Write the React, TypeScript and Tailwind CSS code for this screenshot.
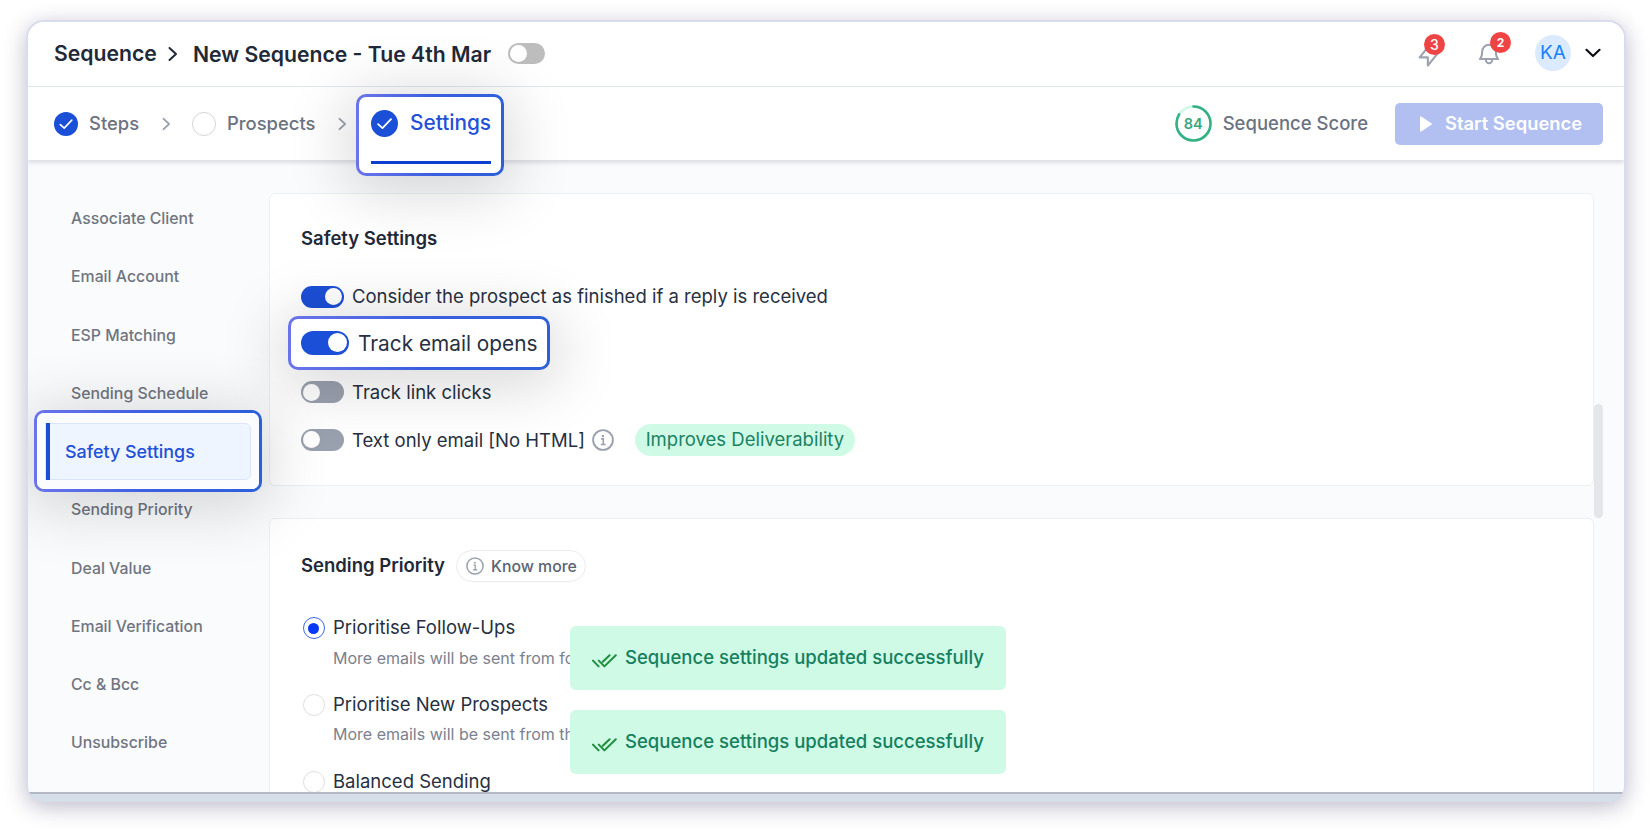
import type { ReactNode } from 'react';
import clsx from 'clsx';

const NAV_BEFORE = ['Associate Client', 'Email Account', 'ESP Matching', 'Sending Schedule'];
const NAV_AFTER = ['Sending Priority', 'Deal Value', 'Email Verification', 'Cc & Bcc', 'Unsubscribe'];

const PRIORITIES = [
  { title: 'Prioritise Follow-Ups', hint: 'More emails will be sent from follow', checked: true },
  { title: 'Prioritise New Prospects', hint: 'More emails will be sent from the', checked: false },
  { title: 'Balanced Sending', checked: false },
];

function Spotlight({ className, children }: { className: string; children: ReactNode }) {
  return (
    <div
      className={clsx(
        'absolute z-10 rounded-[10px] bg-linear-to-r from-[#6b74ea] via-[#3a5fe0] to-[#2e5fdb] p-[3px] shadow-[0_8px_60px_10px_rgba(0,0,0,0.15)]',
        className
      )}
    >
      <div className="h-full w-full rounded-[7px] bg-white">{children}</div>
    </div>
  );
}

function CheckCircle({ className }: { className: string }) {
  return (
    <svg viewBox="0 0 24 24" className={clsx('shrink-0', className)} fill="none">
      <circle cx="12" cy="12" r="12" fill="#1c4fd7" />
      <path d="M6.3 12.6l3.9 3.5 7.6-8" stroke="white" strokeWidth="1.6" strokeLinecap="round" strokeLinejoin="round" />
    </svg>
  );
}

function Chevron({ className }: { className: string }) {
  return (
    <svg viewBox="0 0 10 16" className={clsx('shrink-0', className)} fill="none" stroke="currentColor">
      <path d="M1.5 2l6.5 6-6.5 6" strokeWidth="2" strokeLinecap="round" strokeLinejoin="round" />
    </svg>
  );
}

function InfoIcon({ className }: { className: string }) {
  return (
    <svg viewBox="0 0 24 24" className={clsx('shrink-0 text-[#9aa1ae]', className)} fill="none" stroke="currentColor">
      <circle cx="12" cy="12" r="10.8" strokeWidth="2" />
      <path d="M10 10.8h2.3v6M9.6 17h5.2" strokeWidth="1.7" />
      <circle cx="11.9" cy="7.6" r="1.3" fill="currentColor" stroke="none" />
    </svg>
  );
}

function Toggle({ on }: { on?: boolean }) {
  return (
    <span
      className={clsx(
        'flex h-[22px] w-[43px] shrink-0 items-center rounded-full px-[2px]',
        on ? 'justify-end bg-[#1c4fd7]' : 'bg-[#9aa1ae]'
      )}
    >
      <span className="h-[17px] w-[17px] rounded-full bg-white" />
    </span>
  );
}

function Toast() {
  return (
    <div className="flex h-16 w-[436px] items-center rounded-md bg-[#cffae6] pl-[22px]">
      <svg viewBox="0 0 25 14" className="mt-[5px] h-[14px] w-[25px] shrink-0" fill="none" stroke="#1e8f3c" strokeWidth="2" strokeLinecap="round" strokeLinejoin="round">
        <path d="M1 6.6l5.6 5.8M6.8 6.6l5.6 5.8L23.8 1.2M10.8 7.8l6.8-6.6" />
      </svg>
      <span className="ml-2 text-[18.55px] font-medium whitespace-nowrap text-[#14805e]">
        Sequence settings updated successfully
      </span>
    </div>
  );
}

function Header() {
  return (
    <header className="flex h-[65px] shrink-0 items-center border-b border-[#e5e7eb] pr-[23px] pb-[2px] pl-[26px] text-[#1f2937]">
      <span className="w-[103px] pt-[2px] text-[21.2px] font-semibold">Sequence</span>
      <Chevron className="mt-px ml-[11px] h-4 w-[10px]" />
      <span className="ml-[15px] pt-[3px] text-[21.2px] font-semibold whitespace-nowrap">New Sequence - Tue 4th Mar</span>
      <span className="ml-[17px] flex h-[21px] w-[37px] items-center rounded-full bg-[#bdbdbd] px-[2px]">
        <span className="h-[17px] w-[17px] rounded-full bg-white" />
      </span>
      <div className="ml-auto flex items-center">
        <div className="relative mt-[3px]">
          <svg viewBox="0 0 24 24" className="h-7 w-7" fill="none" stroke="#9ca3af" strokeWidth="1.8" strokeLinejoin="round">
            <path d="M13 10V3L4 14h7v7l9-11h-7z" />
          </svg>
          <span className="absolute top-[-7px] left-[9px] flex h-[21px] w-[21px] items-center justify-center rounded-full bg-[#ef4444] text-[14px] font-medium text-white">
            3
          </span>
        </div>
        <div className="relative ml-[35px]">
          <svg viewBox="0 0 22 26" className="h-[26px] w-[22px]" fill="none" stroke="#9ca3af" strokeWidth="2" strokeLinejoin="round" strokeLinecap="round">
            <path d="M1.8 19h18.400M2.200 18.800c1.600-1.800 2-3 2-7.300a6.800 6.800 0 0 1 13.600 0c0 4.300 .4 5.500 2 7.300M7.800 19.700v.4a3.200 3.200 0 0 0 6.400 0v-.4" />
          </svg>
          <span className="absolute top-[-8px] left-[12px] flex h-[21px] w-[21px] items-center justify-center rounded-full bg-[#ef4444] text-[12px] font-bold text-white">
            2
          </span>
        </div>
        <span className="ml-[35px] flex h-9 w-9 items-center justify-center rounded-full bg-[#dbeafe] pt-px text-[19px] text-[#1a7ffb]">KA</span>
        <svg viewBox="0 0 16 10" className="ml-[14px] h-[10px] w-4" fill="none" stroke="#0b0d12" strokeWidth="2.2" strokeLinecap="round" strokeLinejoin="round">
          <path d="M1.5 1.8l6.5 6.2 6.5-6.2" />
        </svg>
      </div>
    </header>
  );
}

function StepBar() {
  return (
    <div className="relative flex h-[73px] shrink-0 items-center pr-[21px] pl-[26px] text-[18.4px] text-[#6b7280] shadow-[0_3px_4px_rgba(100,110,130,0.2)]">
      <CheckCircle className="h-6 w-6" />
      <span className="ml-[11px] font-medium">Steps</span>
      <Chevron className="ml-[23px] h-[14px] w-[9px] text-[#9ca3af]" />
      <span className="ml-[21px] h-6 w-6 rounded-full border-[1.5px] border-[#d1d5db]" />
      <span className="ml-[11px] font-medium">Prospects</span>
      <Chevron className="ml-[23px] h-[14px] w-[9px] text-[#9ca3af]" />
      <Spotlight className="top-[7px] left-[328px] h-[82px] w-[148px]">
        <div className="flex h-[76px] flex-col pt-[10px] pr-[10px] pl-3">
          <div className="flex h-8 items-center">
            <CheckCircle className="h-[27px] w-[27px]" />
            <span className="ml-3 text-[20.8px] font-medium text-[#2350d8]">Settings</span>
          </div>
          <div className="mt-[22px] h-[3px] bg-[#0b3fd0]" />
        </div>
      </Spotlight>

      <div className="ml-auto flex items-center">
        <div className="relative h-[37px] w-[37px]">
          <svg viewBox="0 0 37 37" className="h-[37px] w-[37px] -rotate-90" fill="none" strokeWidth="2.6">
            <circle cx="18.5" cy="18.5" r="17" stroke="#d1fae5" />
            <circle cx="18.5" cy="18.5" r="17" stroke="#35b083" pathLength="100" strokeDasharray="84 16" strokeLinecap="round" />
          </svg>
          <span className="absolute inset-0 flex items-center justify-center text-[14.5px] font-semibold text-[#35a97e]">84</span>
        </div>
        <span className="ml-[11px] pt-px text-[18.5px] font-medium whitespace-nowrap">Sequence Score</span>
        <button className="ml-[27px] flex h-[42px] w-[208px] items-center rounded-[5px] bg-[#b1c0f1] pl-[25px] text-[18.4px] font-semibold text-white">
          <svg viewBox="0 0 12 16" className="h-4 w-3" fill="white">
            <path d="M0 1.2C0 .4.6.1 1.2.5l10.2 6.7c.6.4.6 1.1 0 1.5L1.2 15.5C.6 15.9 0 15.6 0 14.8z" />
          </svg>
          <span className="ml-[13px] whitespace-nowrap">Start Sequence</span>
        </button>
      </div>
    </div>
  );
}

function NavItem({ label }: { label: string }) {
  return <div className="flex h-[58.25px] items-center pl-[43px]">{label}</div>;
}

function Sidebar() {
  return (
    <nav className="w-[241px] shrink-0 pt-[30px] text-[15.85px] font-medium text-[#6f757f]">
      {NAV_BEFORE.map(label => (
        <NavItem key={label} label={label} />
      ))}
      <div className="relative h-[58.25px]">
        <Spotlight className="top-[-13px] left-[6px] h-[82px] w-[228px]">
          <div className="h-full rounded-[7px] bg-[#fbfcfe] p-[10px] pl-2">
            <div className="flex h-[57px] w-[206px] items-center rounded-md rounded-l-none border border-[#dbe6fb] bg-[#eef5ff] text-[17.9px] text-[#2350d8]">
              <span className="h-[57px] w-1 bg-[#1c4fd0]" />
              <span className="ml-[15px] pt-px">Safety Settings</span>
            </div>
          </div>
        </Spotlight>
      </div>
      {NAV_AFTER.map(label => (
        <NavItem key={label} label={label} />
      ))}
    </nav>
  );
}

function SafetyCard() {
  return (
    <section className="h-[293px] shrink-0 rounded-md border border-[#edf0f3] bg-white pl-[31px] text-[18.5px] text-[#273041]">
      <h2 className="mt-[30px] leading-7 font-semibold text-[#1f2937]">Safety Settings</h2>
      <div className="mt-[21px]">
        <div className="flex h-[47.7px] items-center gap-2">
          <Toggle on />
          <span className="pt-px">Consider the prospect as finished if a reply is received</span>
        </div>
        <div className="relative h-[47.7px]">
          <Spotlight className="top-[-5px] left-[-13px] h-[54px] w-[262px]">
            <div className="flex h-12 items-center pl-[10px] text-[20.8px] whitespace-nowrap">
              <span className="flex h-6 w-[48px] shrink-0 items-center justify-end rounded-full bg-[#1c4fd7] px-[2px]">
                <span className="h-[19px] w-[19px] rounded-full bg-white" />
              </span>
              <span className="ml-[9px] pt-px">Track email opens</span>
            </div>
          </Spotlight>
        </div>
        <div className="flex h-[47.7px] items-center gap-2">
          <Toggle />
          <span className="pt-px">Track link clicks</span>
        </div>
        <div className="flex h-[47.7px] items-center gap-2">
          <Toggle />
          <span className="pt-px">Text only email [No HTML]</span>
          <InfoIcon className="-ml-px h-[22px] w-[22px]" />
          <span className="ml-[13px] flex h-8 w-[220px] items-center justify-center rounded-full bg-[#cffae6] text-[#1b8262]">
            Improves Deliverability
          </span>
        </div>
      </div>
    </section>
  );
}

function PriorityCard() {
  return (
    <section className="h-[400px] shrink-0 rounded-md border border-[#edf0f3] bg-white pl-[31px] text-[18.5px] text-[#273041]">
      <div className="mt-[31px] flex h-8 items-center">
        <h2 className="font-semibold text-[#1f2937]">Sending Priority</h2>
        <span className="ml-[11px] flex h-8 w-[130px] items-center rounded-full border-[1.5px] border-[#e9ebee] pl-[9px] text-[15.85px] font-medium text-[#5b6373]">
          <InfoIcon className="h-[18px] w-[18px]" />
          <span className="ml-[7px] pt-px whitespace-nowrap">Know more</span>
        </span>
      </div>
      <div className="mt-[31px]">
        {PRIORITIES.map(item => (
          <div key={item.title} className="flex h-[76.8px]">
            <span
              className={clsx(
                'mt-1 ml-[1.5px] flex h-[22px] w-[22px] shrink-0 items-center justify-center rounded-full border-[1.5px]',
                item.checked ? 'border-[#3d66e8]' : 'border-[#dedfe2]'
              )}
            >
              {item.checked && <span className="mr-px h-[11px] w-[11px] rounded-full bg-[#0838f5]" />}
            </span>
            <div className="ml-[8.5px]">
              <div className="h-7 leading-7">{item.title}</div>
              {item.hint && <div className="mt-[2.5px] text-[16px] leading-7 text-[#7b818e]">{item.hint}</div>}
            </div>
          </div>
        ))}
      </div>
    </section>
  );
}

export default function App() {
  return (
    <div className="h-[832px] w-[1650px] overflow-hidden bg-white px-[26px] pt-5 font-['Inter',sans-serif]">
      <div className="h-[782px] w-[1600px] rounded-[18px] border-2 border-b-0 border-[#d9dcec] bg-[#d8deea] shadow-[0_5px_22px_rgba(50,45,90,0.32)]">
        <div className="h-[780px] overflow-hidden rounded-2xl bg-[#d6deea]">
          <div className="relative flex h-[772px] flex-col overflow-hidden border-b-2 border-[#b3b8c4] bg-[#fafbfd]">
            <div className="relative z-10 bg-white">
              <Header />
              <StepBar />
            </div>
            <div className="flex min-h-0 flex-1">
              <Sidebar />
              <main className="mt-[33px] flex h-[700px] w-[1325px] flex-col gap-8">
                <SafetyCard />
                <PriorityCard />
              </main>
              <div className="mt-[244px] h-[114px] w-[9px] rounded-full bg-[#e5e6ea]" />
            </div>
            <div className="absolute top-[604px] left-[542px] z-20 flex flex-col gap-5">
              <Toast />
              <Toast />
            </div>
          </div>
        </div>
      </div>
    </div>
  );
}
